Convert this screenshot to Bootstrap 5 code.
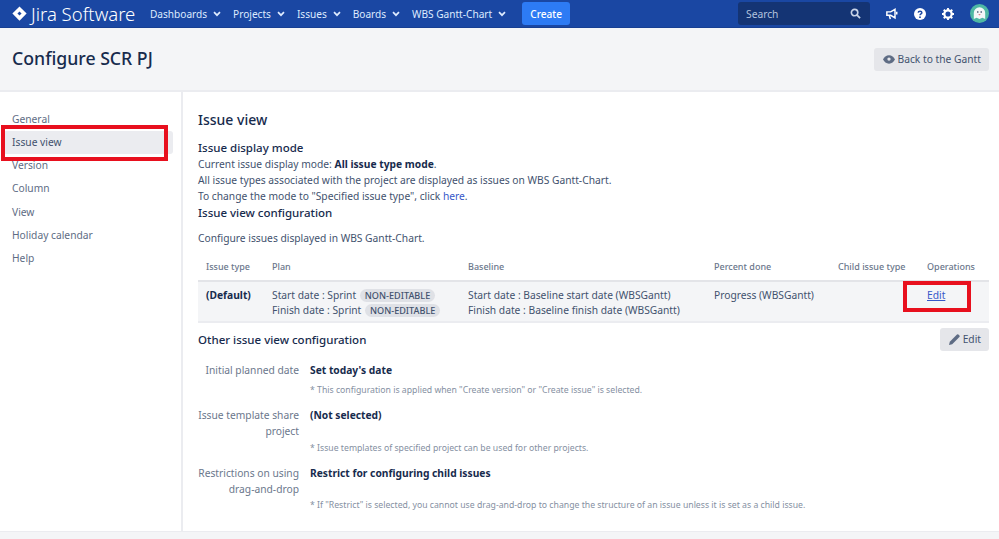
<!DOCTYPE html>
<html lang="en"><head><meta charset="utf-8"><title>Configure SCR PJ</title>
<link href="https://cdn.jsdelivr.net/npm/bootstrap@5.3.0/dist/css/bootstrap.min.css" rel="stylesheet">
<style>
html,body{height:539px;overflow:hidden}
body{font-family:"Noto Sans","Open Sans",sans-serif;font-size:10.25px;line-height:16px;color:#42526e;position:relative;background:#fff}
.topbar{height:28px;background:#1a47a3;border-bottom:1px solid #173f92;color:#deebff;padding:0 0 0 12px}
.brand{color:#fff;font-size:18.5px;font-weight:300;width:138px;gap:4px}
.menu-item{color:#deebff;font-size:10.1px;gap:6px}
.menu-list{gap:12px}
.create-btn{background:#2d7bf4;color:#fff;font-size:10.1px;font-weight:500;height:23px;width:48px;border-radius:3px;margin-left:4px;border:0;padding:0}
.searchbox{background:#143474;width:132px;height:23px;border-radius:3px;color:#b3c3de;padding:0 9px 0 8px;margin-left:auto}
.top-icons{gap:16px;margin:0 10px 0 16px}
.pagehead{height:64px;background:#f4f5f7;border-bottom:2px solid #ebecf0;padding:0 10px 0 12px}
.pagehead h1{font-size:17.7px;font-weight:500;color:#172b4d;margin:0}
.gray-btn{background:#e5e6ea;color:#42526e;font-size:10.25px;height:23px;border-radius:3px;border:0;padding:0 8px 0 9px;gap:3px}
.page-main{height:439px}
.sidenav{width:183px;border-right:2px solid #ebecf0;padding:15.5px 8px 0 3px;flex:none}
.sidenav a{display:block;height:23.3px;line-height:23.3px;padding-left:9px;color:#5e6c84;text-decoration:none;border-radius:3px}
.sidenav a.on{background:#ebecf0;color:#42526e}
.contentarea{padding:17.5px 10px 0 15px;flex:1;min-width:0}
.contentarea h2{font-size:14px;font-weight:500;color:#172b4d;margin:0 0 9.5px;line-height:20px}
.contentarea h3{font-size:11.5px;font-weight:500;color:#172b4d;margin:0;line-height:17px}
.contentarea p{margin:0}
.contentarea p.gapline{margin-top:9px}
.contentarea b{font-weight:700;color:#172b4d}
.blue{color:#3658c9;text-decoration:none}
.cfgtable{width:100%;table-layout:fixed;border-collapse:collapse;margin-top:8px}
.cfgtable th{font-size:9px;font-weight:500;color:#6b778c;height:27px;padding:0 8px;border-bottom:2px solid #e3e4e8;vertical-align:middle}
.cfgtable td{background:#f4f5f7;padding:6px 8px 3px;vertical-align:top;border-bottom:2px solid #ebecf0;line-height:15px}
.lozenge{display:inline-block;background:#dfe1e6;color:#42526e;font-size:9.1px;font-weight:500;line-height:13px;padding:0 5px;border-radius:7px;margin-left:1px}
.otherhead{margin-top:4px;height:24px}
.kv{display:flex;gap:11px;margin-top:10px}
.kv.first{margin-top:11px}
.kv .lab{width:101px;text-align:right;color:#6b778c;flex:none;white-space:nowrap}
.hint{color:#8590a2;font-size:8.7px;line-height:13px;margin-top:6px}
.hint.tall{margin-top:18.5px}
.footband{position:absolute;left:0;right:0;bottom:0;height:8px;background:#f4f5f7;border-top:1px solid #ebecf0}
.redbox{position:absolute;border:4px solid #e8101e}
.rb1{left:1px;top:125px;width:167px;height:36px}
.rb2{left:903px;top:281px;width:68px;height:31px}
</style></head><body>
<nav class="topbar d-flex align-items-center">
  <div class="brand d-flex align-items-center"><svg width="15" height="15" viewBox="0 0 16 16"><path fill="#fff" d="M8 .4 15.600 8 8 15.600 .4 8z"/><path fill="#1a47a3" d="M8 5.800 10.200 8 8 10.200 5.800 8z"/></svg><span>Jira Software</span></div>
  <div class="menu-list d-flex align-items-center">
    <span class="menu-item d-flex align-items-center">Dashboards <svg width="8" height="6" viewBox="0 0 8 6"><path d="M1 1.200 4 4.200 7 1.200" fill="none" stroke="#deebff" stroke-width="1.700"/></svg></span>
    <span class="menu-item d-flex align-items-center">Projects <svg width="8" height="6" viewBox="0 0 8 6"><path d="M1 1.200 4 4.200 7 1.200" fill="none" stroke="#deebff" stroke-width="1.700"/></svg></span>
    <span class="menu-item d-flex align-items-center">Issues <svg width="8" height="6" viewBox="0 0 8 6"><path d="M1 1.200 4 4.200 7 1.200" fill="none" stroke="#deebff" stroke-width="1.700"/></svg></span>
    <span class="menu-item d-flex align-items-center">Boards <svg width="8" height="6" viewBox="0 0 8 6"><path d="M1 1.200 4 4.200 7 1.200" fill="none" stroke="#deebff" stroke-width="1.700"/></svg></span>
    <span class="menu-item d-flex align-items-center">WBS Gantt-Chart <svg width="8" height="6" viewBox="0 0 8 6"><path d="M1 1.200 4 4.200 7 1.200" fill="none" stroke="#deebff" stroke-width="1.700"/></svg></span>
    <button class="create-btn">Create</button>
  </div>
  <div class="searchbox d-flex align-items-center justify-content-between"><span>Search</span><svg width="11" height="11" viewBox="0 0 12 12"><circle cx="5" cy="5" r="3.500" fill="none" stroke="#c7d3e8" stroke-width="1.800"/><path d="M7.700 7.700 11 11" stroke="#c7d3e8" stroke-width="2"/></svg></div>
  <div class="top-icons d-flex align-items-center">
    <svg width="12" height="12" viewBox="0 0 14 14"><path fill="none" stroke="#fff" stroke-width="1.700" d="M1 4.500h4.500L10.500 1.500v10L5.500 8.500H1z"/><path stroke="#fff" stroke-width="1.800" fill="none" d="M4 9l1 4M12.500 4.500v3"/></svg>
    <svg width="12" height="12" viewBox="0 0 14 14"><circle cx="7" cy="7" r="7" fill="#fff"/><path d="M4.900 5.400C5 3.200 9.200 3.200 9.200 5.400 9.200 7 7 6.800 7 8.500" fill="none" stroke="#1a47a3" stroke-width="1.700"/><circle cx="7" cy="10.700" r="1.100" fill="#1a47a3"/></svg>
    <svg width="12" height="12" viewBox="0 0 14 14"><circle cx="7" cy="7" r="4.300" fill="none" stroke="#fff" stroke-width="2.600"/><path stroke="#fff" stroke-width="2.200" d="M7 0v2.500M7 11.500V14M0 7h2.500M11.500 7H14M2 2l1.800 1.800M10.200 10.200 12 12M2 12l1.800-1.800M10.200 3.800 12 2"/></svg>
    <svg width="19" height="19" viewBox="0 0 19 19"><circle cx="9.500" cy="9.500" r="9.500" fill="#4fb8a4"/><path fill="#f3f7f8" d="M3.800 15V9a5.700 5.700 0 0 1 11.400 0v6l-2.800-1.200-2.900 1.200-2.900-1.200z"/><circle cx="7.800" cy="8" r=".8" fill="#253858"/><circle cx="11.200" cy="8" r=".8" fill="#253858"/><path d="M8.500 10.200h2a1 1 0 0 1-2 0z" fill="#e5566a"/></svg>
  </div>
</nav>
<header class="pagehead d-flex align-items-center justify-content-between">
  <h1>Configure SCR PJ</h1>
  <button class="gray-btn d-flex align-items-center"><svg width="12" height="9" viewBox="0 0 13 9"><path fill="#5e6c84" d="M6.500 0C3.500 0 1.300 2 0 4.500 1.300 7 3.500 9 6.500 9s5.200-2 6.500-4.500C11.700 2 9.500 0 6.500 0z"/><circle cx="6.500" cy="4" r="1.800" fill="#e5e6ea"/></svg>Back to the Gantt</button>
</header>
<div class="page-main d-flex">
  <aside class="sidenav">
    <a href="#">General</a><a href="#" class="on">Issue view</a><a href="#">Version</a><a href="#">Column</a><a href="#">View</a><a href="#">Holiday calendar</a><a href="#">Help</a>
  </aside>
  <main class="contentarea">
    <h2>Issue view</h2>
    <h3>Issue display mode</h3>
    <p>Current issue display mode: <b>All issue type mode</b>.</p>
    <p>All issue types associated with the project are displayed as issues on WBS Gantt-Chart.</p>
    <p>To change the mode to "Specified issue type", click <a class="blue" href="#">here</a>.</p>
    <h3>Issue view configuration</h3>
    <p class="gapline">Configure issues displayed in WBS Gantt-Chart.</p>
    <table class="cfgtable">
      <colgroup><col style="width:66px"><col style="width:196px"><col style="width:246px"><col style="width:124px"><col style="width:89px"><col></colgroup>
      <thead><tr><th>Issue type</th><th>Plan</th><th>Baseline</th><th>Percent done</th><th>Child issue type</th><th>Operations</th></tr></thead>
      <tbody><tr>
        <td><b>(Default)</b></td>
        <td>Start date : Sprint <span class="lozenge">NON-EDITABLE</span><br>Finish date : Sprint <span class="lozenge">NON-EDITABLE</span></td>
        <td>Start date : Baseline start date (WBSGantt)<br>Finish date : Baseline finish date (WBSGantt)</td>
        <td>Progress (WBSGantt)</td>
        <td></td>
        <td><a class="blue text-decoration-underline" href="#">Edit</a></td>
      </tr></tbody>
    </table>
    <div class="otherhead d-flex align-items-center justify-content-between">
      <h3>Other issue view configuration</h3>
      <button class="gray-btn d-flex align-items-center"><svg width="11" height="11" viewBox="0 0 11 11"><path fill="#5e6c84" d="M0 11l.8-3.200L8 .6a1 1 0 0 1 1.400 0l1 1a1 1 0 0 1 0 1.400L3.200 10.200z"/></svg>Edit</button>
    </div>
    <div class="kv first"><div class="lab">Initial planned date</div><div><b>Set today's date</b><div class="hint">* This configuration is applied when "Create version" or "Create issue" is selected.</div></div></div>
    <div class="kv"><div class="lab">Issue template share<br>project</div><div><b>(Not selected)</b><div class="hint tall">* Issue templates of specified project can be used for other projects.</div></div></div>
    <div class="kv"><div class="lab">Restrictions on using<br>drag-and-drop</div><div><b>Restrict for configuring child issues</b><div class="hint tall">* If "Restrict" is selected, you cannot use drag-and-drop to change the structure of an issue unless it is set as a child issue.</div></div></div>
  </main>
</div>
<div class="footband"></div>
<div class="redbox rb1"></div>
<div class="redbox rb2"></div>
<script src="https://cdn.jsdelivr.net/npm/bootstrap@5.3.0/dist/js/bootstrap.bundle.min.js"></script>
</body></html>
